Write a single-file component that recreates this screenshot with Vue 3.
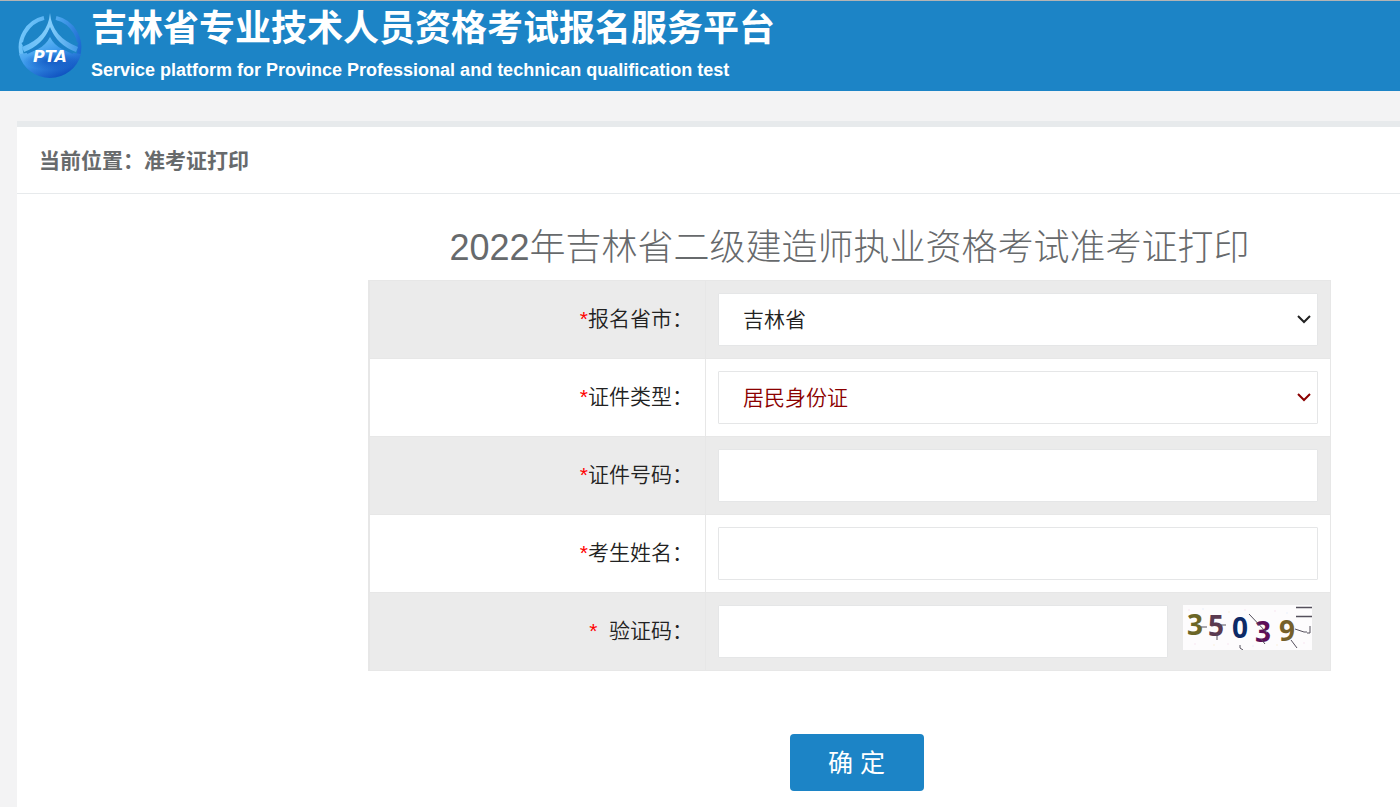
<template>
  <div class="page">
    <header class="header">
      <svg class="logo" viewBox="0 0 66 68" aria-hidden="true">
        <defs>
          <linearGradient id="ball" x1="0.1" y1="0" x2="0.75" y2="1">
            <stop offset="0" stop-color="#78ccfb" />
            <stop offset="0.45" stop-color="#3d9aec" />
            <stop offset="1" stop-color="#0a49bb" />
          </linearGradient>
          <linearGradient id="ring" gradientUnits="userSpaceOnUse" x1="2" y1="20" x2="64" y2="40">
            <stop offset="0" stop-color="#74c8fb" />
            <stop offset="0.5" stop-color="#4ba6ee" />
            <stop offset="1" stop-color="#1a66cf" />
          </linearGradient>
          <linearGradient id="wing" gradientUnits="userSpaceOnUse" x1="4" y1="0" x2="62" y2="0">
            <stop offset="0" stop-color="#62baf6" />
            <stop offset="0.5" stop-color="#83cdfb" />
            <stop offset="1" stop-color="#3f97e6" />
          </linearGradient>
          <radialGradient id="shade" cx="0.5" cy="0.5" r="0.5">
            <stop offset="0" stop-color="#0d50bf" stop-opacity="0.8" />
            <stop offset="1" stop-color="#0d50bf" stop-opacity="0" />
          </radialGradient>
        </defs>
        <!-- outer ring, open at the top -->
        <path d="M27 5 A30 30 0 0 0 5 43 M39 5 A30 30 0 0 1 61 43" fill="none" stroke="url(#ring)" stroke-width="4" />
        <!-- lower bowl -->
        <path d="M2 41 Q14 40 21 36 Q29 32 33 24 Q37 32 45 36 Q52 40 64 41 A32 32 0 0 1 2 41 Z" fill="url(#ball)" />
        <ellipse cx="34" cy="48" rx="28" ry="9" fill="url(#shade)" />
        <!-- arches rising to the peak -->
        <path d="M33 0 Q31 24 5 34 L7 39 Q26 32 33 14 Q40 32 59 39 L61 34 Q35 24 33 0 Z" fill="url(#wing)" />
        <path d="M33 17 Q29 32 10 40 M33 17 Q37 32 56 40" fill="none" stroke="#1c7fca" stroke-width="2" />
        <path d="M28 7 Q22 22 5 31 M38 7 Q44 22 61 31" fill="none" stroke="#1c84c6" stroke-width="2" />
        <text x="33" y="49" text-anchor="middle" class="logo-text">PTA</text>
      </svg>
      <div class="site">
        <h1 class="site-name">吉林省专业技术人员资格考试报名服务平台</h1>
        <p class="site-sub">Service platform for Province Professional and technican qualification test</p>
      </div>
    </header>

    <main class="panel">
      <div class="crumb">当前位置：准考证打印</div>

      <form class="form" @submit.prevent>
        <h2 class="form-title">2022年吉林省二级建造师执业资格考试准考证打印</h2>
        <table class="fields">
          <tbody>
            <tr v-for="f in fields" :key="f.id">
              <th scope="row">
                <label :for="f.id"><span class="star">*</span><template v-if="f.id === 'code'">&nbsp;&nbsp;</template>{{ f.label }}：</label>
              </th>
              <td>
                <div class="cell">
                  <div v-if="f.options" class="select-wrap" :class="{ red: f.red }">
                    <select :id="f.id" v-model="form[f.id]" class="control">
                      <option v-for="o in f.options" :key="o">{{ o }}</option>
                    </select>
                    <svg class="arrow" viewBox="0 0 14 9" aria-hidden="true">
                      <path d="M1 1 L7 7 L13 1" fill="none" stroke="currentColor" stroke-width="2" />
                    </svg>
                  </div>
                  <input v-else :id="f.id" v-model="form[f.id]" type="text" class="control">
                  <svg v-if="f.id === 'code'" class="captcha" viewBox="0 0 129 45" role="img" aria-label="验证码">
                    <rect width="129" height="45" fill="#fdfcfd" />
                    <circle v-for="(d, i) in dots" :key="i" :cx="d[0]" :cy="d[1]" r="0.8" :fill="d[2]" />
                    <text v-for="c in digits" :key="c.x" :x="c.x" :y="c.y" :fill="c.color">{{ c.ch }}</text>
                    <g fill="none" stroke="#55505c" stroke-width="1">
                      <path d="M113 2.5 H129 M113 11.5 H129" stroke-width="1.5" />
                      <path d="M18 22 H24 M36 20 H43 M34 29 V35" />
                      <path d="M66 9 L84 28 M78 34 L82 39" />
                      <path d="M57 40 V43 L60 45" />
                      <path d="M108 35 L114 43 M112 24 L121 27 H124 M127 21 V28 H124" />
                    </g>
                  </svg>
                </div>
              </td>
            </tr>
          </tbody>
        </table>
        <div class="actions">
          <button type="submit" class="submit">确 定</button>
        </div>
      </form>
    </main>
  </div>
</template>

<script setup>
import { reactive } from 'vue'

const fields = [
  { id: 'province', label: '报名省市', options: ['吉林省'] },
  { id: 'idType', label: '证件类型', options: ['居民身份证'], red: true },
  { id: 'idNo', label: '证件号码' },
  { id: 'name', label: '考生姓名' },
  { id: 'code', label: '验证码' },
]

const form = reactive({
  province: '吉林省',
  idType: '居民身份证',
  idNo: '',
  name: '',
  code: '',
})

const digits = [
  { ch: '3', x: 4, y: 30, color: '#6b6526' },
  { ch: '5', x: 25, y: 31, color: '#5a3a50' },
  { ch: '0', x: 49, y: 33, color: '#0c2a66' },
  { ch: '3', x: 72, y: 37, color: '#5c0f58' },
  { ch: '9', x: 96, y: 36, color: '#75602a' },
]

// faint noise behind the digits
const dots = [
  [6, 5, '#f6e3ee'], [20, 4, '#e6eefa'], [31, 40, '#f8f0d8'], [12, 39, '#f6e3ee'],
  [46, 7, '#f8f0d8'], [62, 5, '#f6e3ee'], [70, 41, '#e6eefa'], [92, 6, '#f6e3ee'],
  [104, 8, '#e6eefa'], [94, 40, '#f8f0d8'], [121, 38, '#f6e3ee'], [45, 39, '#f6e3ee'],
]
</script>

<style>
body {
  margin: 0;
  background: #f3f3f4;
}
</style>

<style scoped>
.page {
  min-height: 100vh;
  display: flex;
  flex-direction: column;
  font-family: "Liberation Sans", "Noto Sans CJK SC", sans-serif;
  color: #222;
}
.header {
  display: flex;
  gap: 8px;
  height: 90px;
  padding-left: 17px;
  border-top: 1px solid #b4b4b4;
  background: #1c84c6;
  color: #fff;
}
.logo {
  width: 66px;
  height: 68px;
  margin-top: 12px;
}
.logo-text {
  font: italic bold 16px "DejaVu Sans", sans-serif;
  fill: #fff;
}
.site {
  padding-top: 1px;
}
.site-name {
  margin: 0;
  font-size: 36px;
  line-height: 54px;
}
.site-sub {
  margin: 0;
  font-size: 18px;
  font-weight: bold;
  line-height: 28px;
}
.panel {
  flex: 1;
  margin: 30px 0 0 17px;
  border-top: 6px solid #e7eaec;
  background: #fff;
}
.crumb {
  padding: 2px 0 0 22px;
  border-bottom: 1px solid #e7eaec;
  font-size: 21px;
  font-weight: bold;
  line-height: 64px;
  color: #676a6c;
}
.form {
  padding: 34px 69px 16px 351px;
}
.form-title {
  margin: 0;
  font-size: 36px;
  font-weight: 300;
  line-height: 40px;
  padding-bottom: 12px;
  text-align: center;
  color: #676a6c;
}
.fields {
  width: 100%;
  border-collapse: collapse;
  border: 1px solid #e7e7e7;
  border-left-width: 2px;
}
.fields tr:nth-child(odd) {
  background: #ebebeb;
}
.fields th,
.fields td {
  border: 1px solid #e7e7e7;
  padding: 12px;
}
.fields th {
  width: 35%;
  box-sizing: border-box;
  padding-bottom: 18px;
  font-size: 21px;
  font-weight: 350;
  text-align: right;
}
.star {
  color: red;
}
.cell {
  display: flex;
}
.select-wrap {
  position: relative;
  flex: 1;
  display: flex;
}
.control {
  flex: 1;
  min-width: 0;
  height: 53px;
  box-sizing: border-box;
  margin: 0;
  padding: 0 24px;
  border: 1px solid #e5e6e7;
  border-radius: 1px;
  appearance: none;
  background: #fff;
  font-family: inherit;
  font-size: 21px;
  font-weight: 350;
  color: #222;
}
.red,
.red .control {
  color: #8b0000;
}
.arrow {
  position: absolute;
  right: 7px;
  top: 22px;
  width: 14px;
  height: 9px;
  pointer-events: none;
}
.captcha {
  width: 129px;
  height: 45px;
  margin: 0 6px 0 15px;
  font: bold 28px "Noto Sans", sans-serif;
}
.actions {
  display: flex;
  justify-content: center;
  padding: 63px 0 0 14px;
}
.submit {
  width: 134px;
  height: 57px;
  padding: 0 0 3px;
  border: 0;
  border-radius: 4px;
  background: #1c84c6;
  font-family: inherit;
  font-size: 25px;
  color: #fff;
}
</style>
